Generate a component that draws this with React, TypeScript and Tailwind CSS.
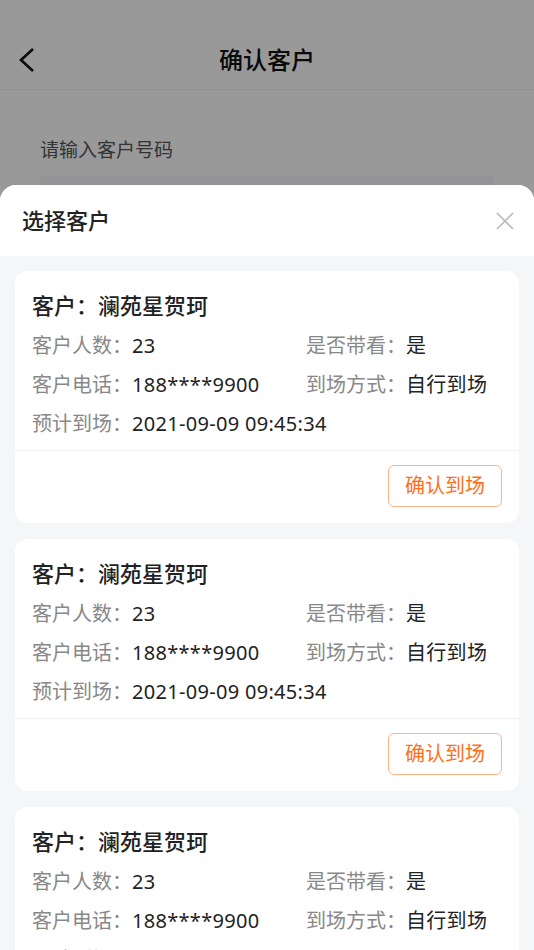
const customers = [
  { name: "澜苑星贺珂", count: "23", withLook: "是", phone: "188****9900", arrival: "自行到场", eta: "2021-09-09 09:45:34" },
  { name: "澜苑星贺珂", count: "23", withLook: "是", phone: "188****9900", arrival: "自行到场", eta: "2021-09-09 09:45:34" },
  { name: "澜苑星贺珂", count: "23", withLook: "是", phone: "188****9900", arrival: "自行到场", eta: "2021-09-09 09:45:34" },
];

const font = { fontFamily: '"Noto Sans", "Noto Sans CJK SC", sans-serif' };

function Field({ label, value }: { label: string; value: string }) {
  return (
    <div className="whitespace-nowrap">
      <span className="text-[#888]">{label}：</span>
      <span className="tracking-[0.3px] text-[#222]">{value}</span>
    </div>
  );
}

function CustomerCard({ c }: { c: (typeof customers)[number] }) {
  return (
    <div className="rounded-[12px] bg-white">
      <div className="px-[17px] pt-[20px] pb-[7px]">
        <p className="text-[22px] leading-[28px] font-medium text-[#222]">客户：{c.name}</p>
        <div className="mt-[7px] grid grid-cols-[274px_1fr] text-[20px] leading-[39px]">
          <Field label="客户人数" value={c.count} />
          <Field label="是否带看" value={c.withLook} />
          <Field label="客户电话" value={c.phone} />
          <Field label="到场方式" value={c.arrival} />
          <div className="col-span-2">
            <Field label="预计到场" value={c.eta} />
          </div>
        </div>
      </div>
      <div className="h-px bg-[#f0f0f0]" />
      <div className="flex justify-end px-[17px] pt-[14px] pb-[16px]">
        <button className="h-[42px] w-[114px] rounded-[6px] border border-[#ffb385] text-[20px] text-[#ff6f1a]">
          确认到场
        </button>
      </div>
    </div>
  );
}

export default function App() {
  return (
    <div className="relative h-[950px] w-full overflow-hidden bg-white" style={font}>
      {/* page behind the sheet */}
      <div className="pt-[30px]">
        <div className="relative flex h-[60px] items-center justify-center border-b border-[#f0f0f0]">
          <svg width="18" height="28" viewBox="0 0 18 28" className="absolute left-[18px] text-[#111]">
            <path d="M15 3L3 14L15 25" fill="none" stroke="currentColor" strokeWidth="2.6" />
          </svg>
          <h1 className="text-[24px] font-medium text-[#111]">确认客户</h1>
        </div>
        <div className="px-[40px] pt-[46px]">
          <p className="text-[19px] leading-[28px] text-[#555]">请输入客户号码</p>
          <div className="mt-[12px] h-[56px] rounded-[4px] bg-[#f5f6f8]" />
        </div>
      </div>

      {/* mask */}
      <div className="absolute inset-0 bg-black/40" />

      {/* bottom sheet */}
      <div className="absolute inset-x-0 top-[185px] bottom-0 overflow-hidden rounded-t-[16px] bg-[#f5f6f8]">
        <div className="flex h-[71px] items-center justify-between bg-white pl-[22px] pr-[20px]">
          <h2 className="text-[22px] font-medium text-[#222]">选择客户</h2>
          <svg width="18" height="18" viewBox="0 0 18 18" className="text-[#bbb]">
            <path d="M1 1L17 17M17 1L1 17" stroke="currentColor" strokeWidth="1.6" />
          </svg>
        </div>
        <div className="flex flex-col gap-[16px] px-[15px] pt-[15px]">
          {customers.map((c, i) => (
            <CustomerCard key={i} c={c} />
          ))}
        </div>
      </div>
    </div>
  );
}
